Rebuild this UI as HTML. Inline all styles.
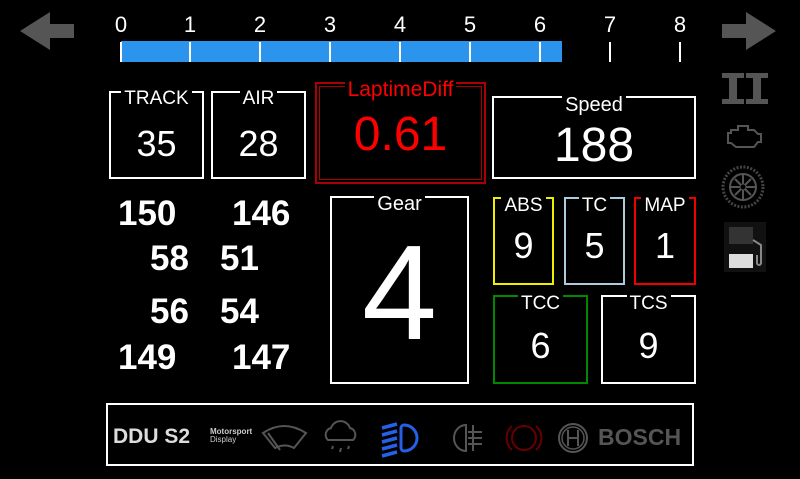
<!DOCTYPE html><html><head><style>
*{margin:0;padding:0;box-sizing:border-box}
body{width:800px;height:479px;background:#000;position:relative;overflow:hidden;font-family:"Liberation Sans",sans-serif;color:#fff}
.a{position:absolute}
.box{position:absolute;border:2px solid #fff}
.lbl{position:absolute;left:0;right:0;top:-12px;text-align:center;line-height:20px}
.lbl span{background:#000;padding:0 3px}
.val{position:absolute;left:0;right:0;text-align:center}
.n{position:absolute;font-weight:bold;font-size:35px;line-height:36px}
.t{position:absolute;top:42px;width:2px;height:20px;background:#fff}
.d{position:absolute;top:13px;font-size:22px;width:20px;text-align:center;margin-left:-10px;line-height:24px}
</style></head><body>
<svg class="a" style="left:0;top:0" width="800" height="479">
<polygon points="20,31 50,12 50,24 74,24 74,38 50,38 50,50" fill="#555"/>
<polygon points="776,31 746,12 746,24 722,24 722,38 746,38 746,50" fill="#555"/>
<g fill="#555"><rect x="722" y="73" width="22" height="5"/><rect x="746" y="73" width="22" height="5"/><rect x="722" y="99" width="22" height="5"/><rect x="746" y="99" width="22" height="5"/><rect x="729" y="76" width="8" height="25"/><rect x="753" y="76" width="8" height="25"/></g>
<path d="M731,130 h7 v-4 h10 v4 h6 l4,4 h3 v8 h-3 l-4,5 h-18 l-5,-4 h-3 v-10 h3z" fill="none" stroke="#555" stroke-width="2"/>
<circle cx="743" cy="187" r="20" fill="none" stroke="#444" stroke-width="3" stroke-dasharray="2 1.5"/>
<circle cx="743" cy="187" r="13" fill="none" stroke="#555" stroke-width="2"/>
<g stroke="#555" stroke-width="2"><line x1="731" y1="187" x2="755" y2="187"/><line x1="743" y1="175" x2="743" y2="199"/><line x1="735" y1="179" x2="751" y2="195"/><line x1="751" y1="179" x2="735" y2="195"/></g>
<circle cx="743" cy="187" r="3" fill="#000" stroke="#555"/>
<rect x="724" y="222" width="42" height="50" fill="#111"/>
<rect x="729" y="227" width="24" height="17" fill="#333"/>
<rect x="729" y="254" width="24" height="14" fill="#ddd"/>
<path d="M753,240 l8,5 v18 a2,2 0 0 1 -4,0 v-8" fill="none" stroke="#888" stroke-width="2"/>
<rect x="121" y="41" width="441" height="21" fill="#2b95ee"/>
</svg>
<div class="t" style="left:120px"></div><div class="t" style="left:189px"></div><div class="t" style="left:259px"></div><div class="t" style="left:329px"></div><div class="t" style="left:399px"></div><div class="t" style="left:469px"></div><div class="t" style="left:539px"></div><div class="t" style="left:609px"></div><div class="t" style="left:679px"></div>
<div class="d" style="left:121px">0</div><div class="d" style="left:190px">1</div><div class="d" style="left:260px">2</div><div class="d" style="left:330px">3</div><div class="d" style="left:400px">4</div><div class="d" style="left:470px">5</div><div class="d" style="left:540px">6</div><div class="d" style="left:610px">7</div><div class="d" style="left:680px">8</div>

<div class="box" style="left:109px;top:91px;width:95px;height:88px"><div class="lbl" style="font-size:19px;top:-4px"><span>TRACK</span></div><div class="val" style="top:30px;font-size:36px">35</div></div>
<div class="box" style="left:211px;top:91px;width:95px;height:88px"><div class="lbl" style="font-size:19px;top:-4px"><span>AIR</span></div><div class="val" style="top:30px;font-size:36px">28</div></div>
<div class="box" style="left:315px;top:82px;width:171px;height:102px;border-color:#a00"><div style="position:absolute;inset:2px;border:1px solid #a00"></div><div class="lbl" style="font-size:21px;top:-4px;color:#f00"><span>LaptimeDiff</span></div><div class="val" style="top:23px;font-size:48px;color:#f00">0.61</div></div>
<div class="box" style="left:492px;top:96px;width:204px;height:83px"><div class="lbl" style="font-size:20px;top:-3px"><span>Speed</span></div><div class="val" style="top:20px;font-size:48px">188</div></div>

<div class="n" style="left:118px;top:196px">150</div><div class="n" style="left:232px;top:196px">146</div>
<div class="n" style="left:150px;top:241px">58</div><div class="n" style="left:220px;top:241px">51</div>
<div class="n" style="left:150px;top:294px">56</div><div class="n" style="left:220px;top:294px">54</div>
<div class="n" style="left:118px;top:340px">149</div><div class="n" style="left:232px;top:340px">147</div>

<div class="box" style="left:330px;top:196px;width:139px;height:188px"><div class="lbl" style="font-size:20px;top:-4px"><span>Gear</span></div><div class="val" style="top:20px;font-size:135px;line-height:150px">4</div></div>
<div class="box" style="left:493px;top:197px;width:61px;height:88px;border-color:#ee0"><div class="lbl" style="font-size:19px;top:-3px"><span>ABS</span></div><div class="val" style="top:26px;font-size:36px">9</div></div>
<div class="box" style="left:564px;top:197px;width:61px;height:88px;border-color:#acd"><div class="lbl" style="font-size:19px;top:-3px"><span>TC</span></div><div class="val" style="top:26px;font-size:36px">5</div></div>
<div class="box" style="left:634px;top:197px;width:62px;height:88px;border-color:#e00"><div class="lbl" style="font-size:19px;top:-3px"><span>MAP</span></div><div class="val" style="top:26px;font-size:36px">1</div></div>
<div class="box" style="left:493px;top:295px;width:95px;height:89px;border-color:#080"><div class="lbl" style="font-size:19px;top:-3px"><span>TCC</span></div><div class="val" style="top:28px;font-size:36px">6</div></div>
<div class="box" style="left:601px;top:295px;width:95px;height:89px"><div class="lbl" style="font-size:19px;top:-3px"><span>TCS</span></div><div class="val" style="top:28px;font-size:36px">9</div></div>

<div class="box" style="left:106px;top:403px;width:588px;height:63px">
<div class="a" style="left:5px;top:20px;font-weight:bold;font-size:21px;color:#ddd">DDU S2</div>
<div class="a" style="left:102px;top:23px;font-size:8px;line-height:8px;color:#ccc;font-weight:bold">Motorsport<br><span style="font-weight:normal">Display</span></div>
<svg class="a" style="left:0;top:0" width="588" height="63">
<path d="M155,28 q21,-14 43,0 l-12,15 q-9,-5 -19,0z" fill="none" stroke="#555" stroke-width="2"/><line x1="160" y1="28" x2="172" y2="45" stroke="#555" stroke-width="2"/>
<path d="M220,35 a7,7 0 0 1 3,-12 a10,10 0 0 1 19,0 a7,7 0 0 1 3,12z" fill="none" stroke="#555" stroke-width="2"/>
<g stroke="#555" stroke-width="2"><line x1="225" y1="41" x2="224" y2="44"/><line x1="233" y1="43" x2="232" y2="47"/><line x1="241" y1="41" x2="240" y2="44"/></g>
<path d="M296,20 a13,13 0 1 1 0,26 a3,3 0 0 1 -3,-3 v-20 a3,3 0 0 1 3,-3z" fill="none" stroke="#2561e8" stroke-width="3"/>
<g stroke="#2561e8" stroke-width="3.5"><line x1="274" y1="23" x2="289" y2="19"/><line x1="274" y1="30" x2="289" y2="26"/><line x1="274" y1="37" x2="289" y2="33"/><line x1="274" y1="44" x2="289" y2="40"/><line x1="274" y1="51" x2="289" y2="47"/></g>
<path d="M358,20 a12,13 0 1 0 0,26z" fill="none" stroke="#555" stroke-width="2"/>
<g stroke="#555" stroke-width="2"><line x1="365" y1="20" x2="365" y2="46"/><line x1="360" y1="27" x2="374" y2="27"/><line x1="360" y1="33" x2="374" y2="33"/><line x1="360" y1="39" x2="374" y2="39"/></g>
<circle cx="416" cy="33" r="12" fill="none" stroke="#600" stroke-width="2"/><path d="M404,21 a16,16 0 0 0 0,24 M428,21 a16,16 0 0 1 0,24" fill="none" stroke="#600" stroke-width="2"/>
<circle cx="465" cy="33" r="14" fill="none" stroke="#555" stroke-width="2"/><circle cx="465" cy="33" r="11" fill="none" stroke="#555" stroke-width="1.5"/>
<path d="M460,25 v16 M470,25 v16 M460,33 h10" stroke="#555" stroke-width="2"/>
</svg>
<div class="a" style="left:490px;top:19px;font-weight:bold;font-size:23px;color:#555">BOSCH</div>
</div>
</body></html>
